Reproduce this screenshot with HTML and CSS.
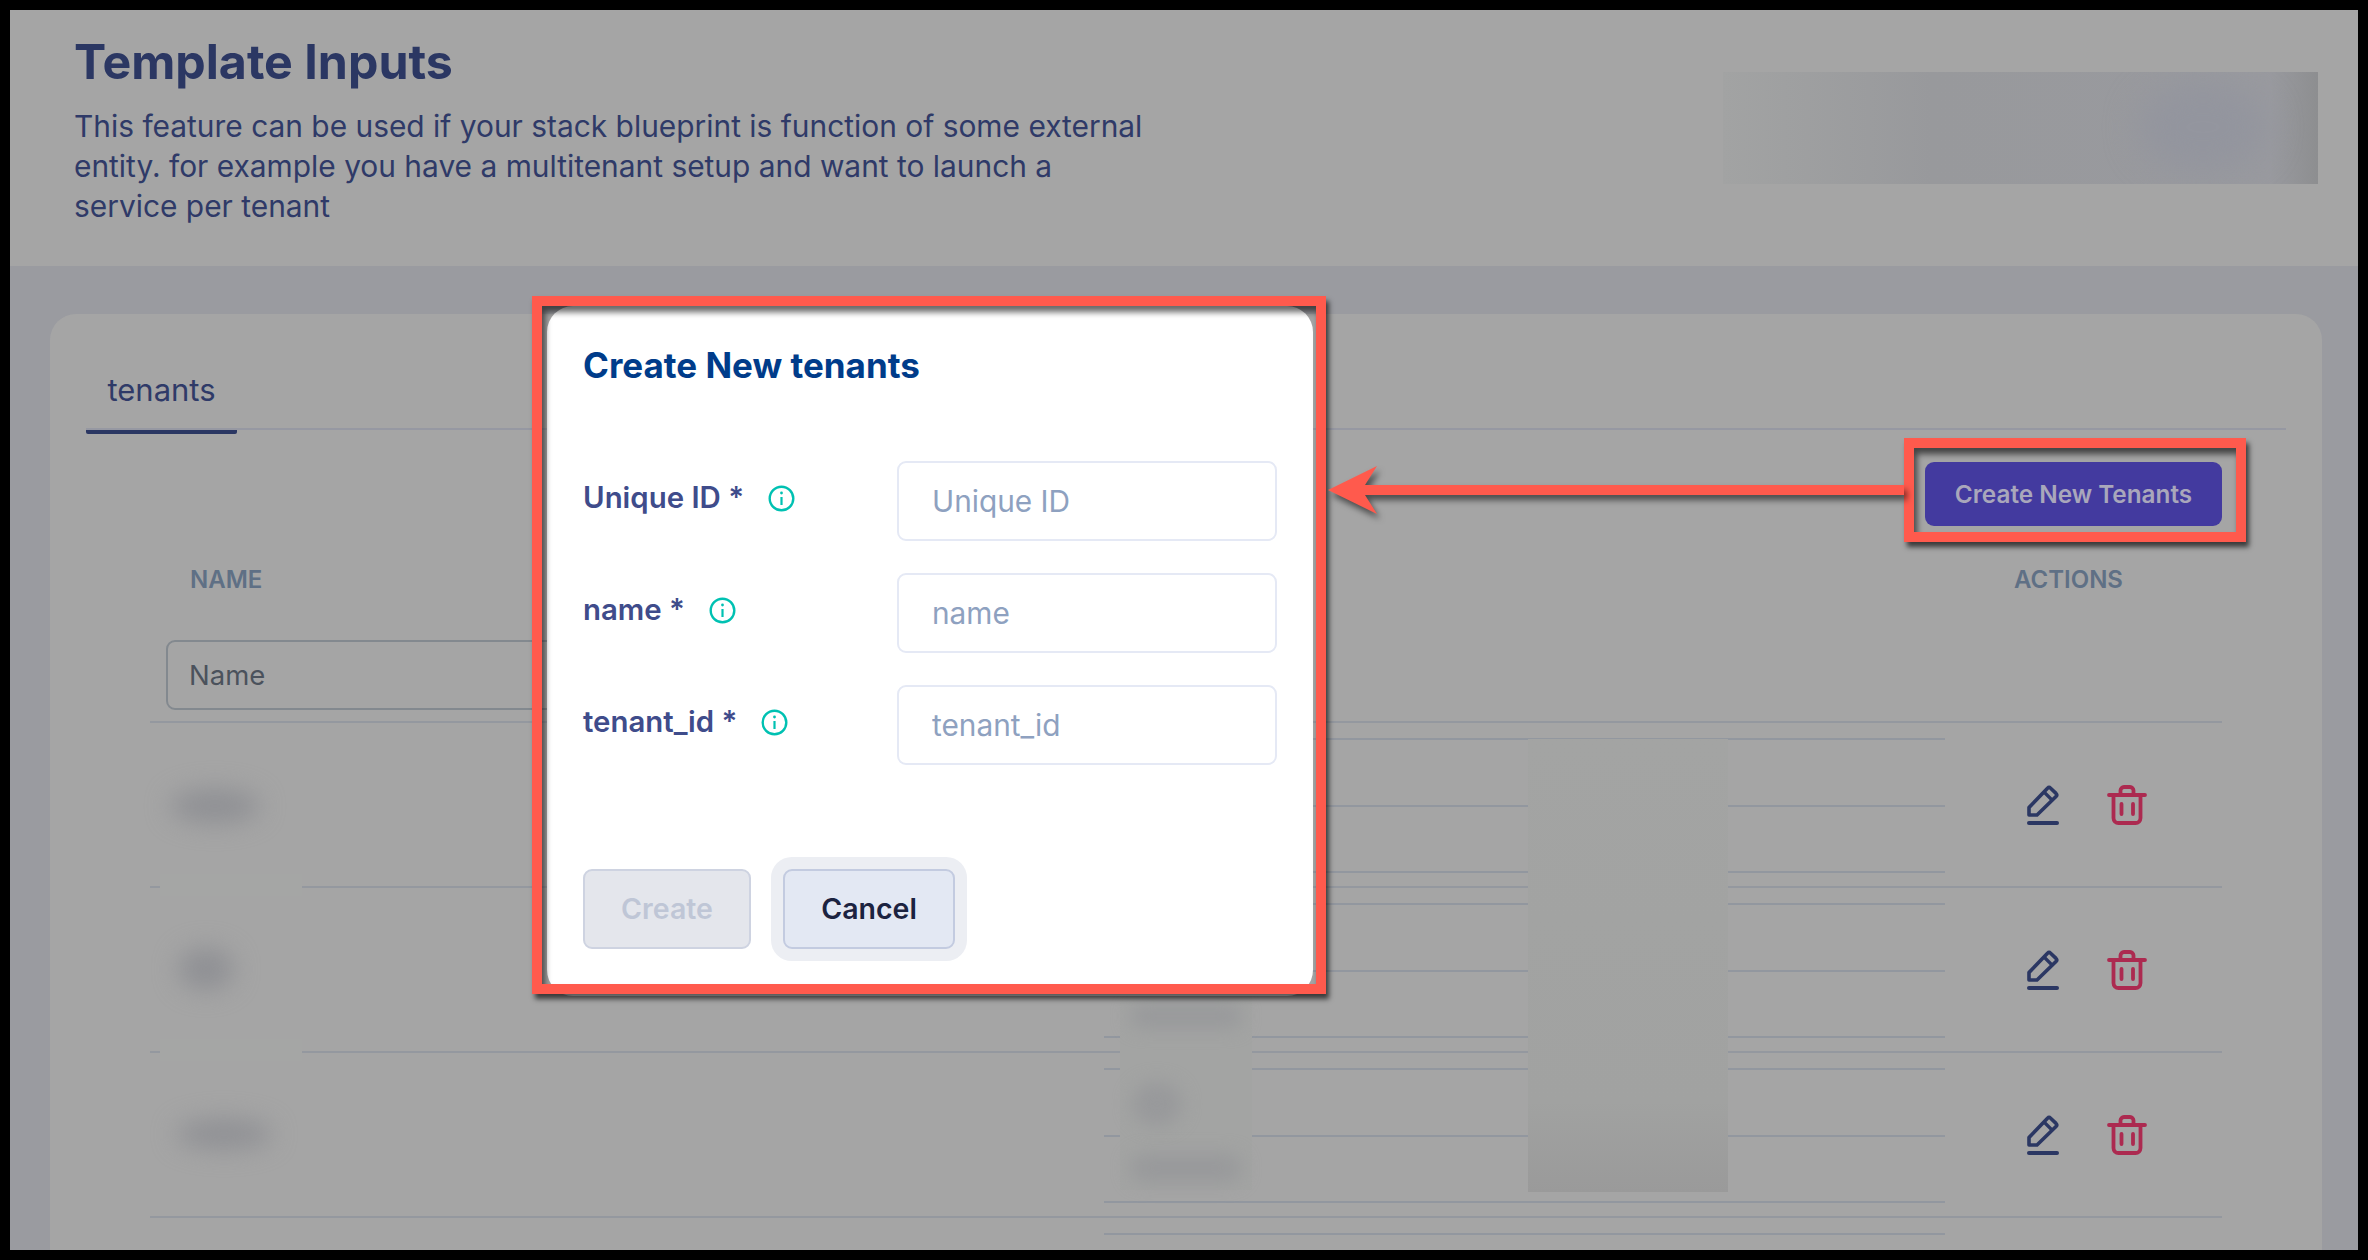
FILE: index.html
```html
<!DOCTYPE html>
<html lang="en">
<head>
<meta charset="utf-8">
<title>Template Inputs</title>
<link rel="stylesheet" href="styles.css">
</head>
<body>
<svg class="defs" width="0" height="0" aria-hidden="true">
  <symbol id="pencil" viewBox="0 0 32 40">
    <path d="M2 30V22.5L20.5 3.2a2.2 2.2 0 0 1 3.1 0l5.4 5.2a2.2 2.2 0 0 1 0 3.1L10 30Z" fill="none" stroke="currentColor" stroke-width="3.6" stroke-linejoin="round"/>
    <path d="M17.5 7.5l7.5 7.5" fill="none" stroke="currentColor" stroke-width="3.2"/>
    <path d="M2 38H30" fill="none" stroke="currentColor" stroke-width="4" stroke-linecap="round"/>
  </symbol>
  <symbol id="trash" viewBox="0 0 40 40">
    <path d="M2 10H38M13.5 10V5.5a3.5 3.5 0 0 1 3.5-3.5h6a3.5 3.5 0 0 1 3.5 3.5V10M6.5 10V33a5 5 0 0 0 5 5h17a5 5 0 0 0 5-5V10M14.500 19V29M26 19V29" fill="none" stroke="currentColor" stroke-width="3.8" stroke-linecap="round"/>
  </symbol>
  <symbol id="info" viewBox="0 0 27 27">
    <circle cx="13.500" cy="13.500" r="11.800" fill="none" stroke="currentColor" stroke-width="2.400"/>
    <circle cx="13.500" cy="8" r="1.400" fill="currentColor"/>
    <path d="M13.500 12V20" fill="none" stroke="currentColor" stroke-width="2.200"/>
  </symbol>
</svg>

<div class="screen">
  <header class="page-head">
    <div class="head-text">
      <h1 class="page-title">Template Inputs</h1>
      <p class="page-desc">This feature can be used if your stack blueprint is function of some external entity. for example you have a multitenant setup and want to launch a service per tenant</p>
    </div>
    <div class="banner"><span class="banner-blob"></span></div>
  </header>

  <main class="card">
    <div class="tabs"><div class="tab">tenants</div></div>
    <div class="toolbar"><button class="btn-primary" type="button">Create New Tenants</button></div>

    <div class="table">
      <div class="thead">
        <span class="th">NAME</span>
        <span class="th th-actions">ACTIONS</span>
      </div>
      <div class="filter-row"><input class="filter" type="text" placeholder="Name"></div>

      <div class="row">
        <div class="cell-name"><span class="smudge smudge-a"></span><span class="cover"></span></div>
        <div class="nested"><div class="sub"></div><div class="sub"></div><div class="sub"></div></div>
        <div class="actions">
          <svg class="ico-edit"><use href="#pencil"/></svg>
          <svg class="ico-del"><use href="#trash"/></svg>
        </div>
      </div>
      <div class="row">
        <div class="cell-name"><span class="smudge smudge-b"></span><span class="cover"></span></div>
        <div class="nested"><div class="sub"></div><div class="sub"></div><div class="sub"></div></div>
        <div class="actions">
          <svg class="ico-edit"><use href="#pencil"/></svg>
          <svg class="ico-del"><use href="#trash"/></svg>
        </div>
      </div>
      <div class="row">
        <div class="cell-name"><span class="smudge smudge-c"></span></div>
        <div class="nested"><div class="sub"></div><div class="sub"></div><div class="sub"></div></div>
        <div class="actions">
          <svg class="ico-edit"><use href="#pencil"/></svg>
          <svg class="ico-del"><use href="#trash"/></svg>
        </div>
      </div>
      <div class="row">
        <div class="cell-name"></div>
        <div class="nested"><div class="sub"></div></div>
        <div class="actions"></div>
      </div>

      <div class="patch patch-left">
        <span class="patch-blob pb-1"></span>
        <span class="patch-blob pb-2"></span>
        <span class="patch-blob pb-3"></span>
      </div>
      <div class="patch patch-right"></div>
    </div>
  </main>

  <section class="modal">
    <h2 class="modal-title">Create New tenants</h2>
    <form class="form">
      <div class="field">
        <label class="field-label">Unique ID *<svg class="ico-info"><use href="#info"/></svg></label>
        <input class="field-input" type="text" placeholder="Unique ID">
      </div>
      <div class="field">
        <label class="field-label">name *<svg class="ico-info"><use href="#info"/></svg></label>
        <input class="field-input" type="text" placeholder="name">
      </div>
      <div class="field">
        <label class="field-label">tenant_id *<svg class="ico-info"><use href="#info"/></svg></label>
        <input class="field-input" type="text" placeholder="tenant_id">
      </div>
    </form>
    <div class="modal-actions">
      <button class="btn-create" type="button" disabled>Create</button>
      <button class="btn-cancel" type="button">Cancel</button>
    </div>
  </section>

  <div class="mark mark-modal"></div>
  <div class="mark mark-button"></div>
  <svg class="arrow" width="600" height="60" viewBox="0 0 600 60">
    <polygon points="8,30 57,6 45,25 584,25 584,35 45,35 57,54" fill="#ff5a4d"/>
  </svg>
</div>
</body>
</html>
```

FILE: styles.css
```css
* { box-sizing: border-box; }

html, body {
  margin: 0;
  padding: 0;
  width: 2368px;
  height: 1260px;
  overflow: hidden;
  background: #000;
  font-family: "Inter", "Liberation Sans", sans-serif;
}

.defs { position: absolute; }

.screen {
  position: relative;
  margin: 10px;
  width: 2348px;
  height: 1240px;
  overflow: hidden;
  background: #9a9ba0;
  display: flex;
  flex-direction: column;
}

/* Page header */
.page-head {
  flex: none;
  height: 256px;
  background: #a5a5a5;
  padding-left: 64px;
  padding-right: 40px;
  display: flex;
  justify-content: space-between;
  align-items: flex-start;
}

.head-text { width: 1075px; }

.page-title {
  margin: 24px 0 0;
  font-size: 48.300px;
  line-height: 56px;
  font-weight: 700;
  color: #2b3763;
}

.page-desc {
  margin: 16px 0 0;
  font-size: 29.900px;
  line-height: 40px;
  font-weight: 400;
  color: #2f3a68;
}

.banner {
  position: relative;
  margin-top: 62px;
  width: 595px;
  height: 112px;
  overflow: hidden;
  background: linear-gradient(90deg, #a2a3a3 0%, #98999c 35%, #999a9f 92%, #8d8e90 100%);
}

.banner-blob {
  position: absolute;
  left: 415px;
  top: 10px;
  width: 130px;
  height: 90px;
  border-radius: 50%;
  background: #93959e;
  filter: blur(16px);
}

/* Card */
.card {
  flex: 1;
  margin: 48px 36px 0 40px;
  background: #a5a5a5;
  border-radius: 26px 26px 0 0;
  min-height: 0;
}

.tabs {
  margin: 0 36px;
  height: 116px;
  border-bottom: 2px solid #9698a2;
}

.tab {
  width: 151px;
  height: 120px;
  padding-top: 56px;
  text-align: center;
  font-size: 31px;
  line-height: 40px;
  color: #2f3a68;
  border-bottom: 4px solid #2b3763;
  border-radius: 0 0 2px 2px;
}

.toolbar {
  display: flex;
  justify-content: flex-end;
  padding: 32px 100px 0 0;
}

.btn-primary {
  width: 297px;
  height: 64px;
  border: 0;
  border-radius: 9px;
  background: #433a9f;
  color: #a9a7bb;
  font: 600 24.300px/1 "Inter", "Liberation Sans", sans-serif;
}

/* Table */
.table {
  position: relative;
  margin: 0 100px;
}

.thead {
  height: 114px;
  padding-top: 41px;
  position: relative;
}

.th {
  display: block;
  margin-left: 40px;
  font-size: 24px;
  line-height: 26px;
  font-weight: 600;
  color: #5f7085;
}

.th-actions {
  position: absolute;
  left: 1864px;
  top: 41px;
  margin: 0;
}

.filter-row {
  height: 83px;
  padding-left: 16px;
  border-bottom: 2px solid #94989f;
}

.filter {
  display: block;
  width: 700px;
  height: 70px;
  padding: 0 21px;
  border: 2px solid #83898f;
  border-radius: 9px;
  background: transparent;
  font: 400 27.500px/1 "Inter", "Liberation Sans", sans-serif;
  outline: 0;
}

.filter::placeholder { color: #4b525c; opacity: 1; }

.row {
  position: relative;
  height: 165px;
  display: grid;
  grid-template-columns: 954px 841px 277px;
  grid-template-rows: minmax(0, 1fr);
  border-bottom: 2px solid #94989f;
}

.cell-name { position: relative; }

.smudge {
  position: absolute;
  display: block;
  background: #8f9094;
  border-radius: 50%;
  filter: blur(12px);
}

.smudge-a { left: 20px; top: 66px; width: 90px; height: 34px; }
.smudge-b { left: 28px; top: 60px; width: 56px; height: 42px; }
.smudge-c { left: 26px; top: 66px; width: 96px; height: 30px; }

.cover {
  position: absolute;
  left: 10px;
  bottom: -10px;
  width: 142px;
  height: 22px;
  background: #a5a6a5;
}

.nested { padding-top: 15px; }

.sub {
  height: 66.500px;
  border-top: 2px solid #92979f;
}

.actions {
  display: flex;
  align-items: center;
  gap: 48px;
  padding-left: 82px;
}

.ico-edit { width: 32px; height: 40px; color: #2b3763; }
.ico-del { width: 40px; height: 40px; color: #ac2a50; }

.patch { position: absolute; }

.patch-right {
  left: 1378px;
  top: 213px;
  width: 200px;
  height: 453px;
  background: linear-gradient(180deg, #a3a4a3 0%, #a1a2a1 80%, #9a9a9a 100%);
}

.patch-left {
  left: 970px;
  top: 197px;
  width: 132px;
  height: 467px;
  background: #a3a4a3;
}

.patch-blob {
  position: absolute;
  display: block;
  background: #98999b;
  filter: blur(9px);
  border-radius: 14px;
}

.pb-1 { left: 10px; top: 281px; width: 112px; height: 24px; }
.pb-2 { left: 12px; top: 359px; width: 50px; height: 44px; border-radius: 50%; }
.pb-3 { left: 10px; top: 431px; width: 112px; height: 28px; }

/* Modal */
.modal {
  position: absolute;
  left: 537px;
  top: 296px;
  width: 766px;
  height: 690px;
  padding: 38px 36px 0 36px;
  background: #fff;
  border-radius: 26px;
}

.modal-title {
  margin: 0;
  font-size: 35px;
  line-height: 42px;
  font-weight: 700;
  color: #003c8a;
}

.form {
  margin-top: 75px;
  display: flex;
  flex-direction: column;
  gap: 32px;
}

.field {
  height: 80px;
  display: flex;
  justify-content: space-between;
  align-items: flex-start;
}

.field-label {
  display: flex;
  align-items: center;
  gap: 24px;
  margin-top: 21px;
  font-size: 29.400px;
  line-height: 32px;
  font-weight: 600;
  color: #3f4c8b;
}

.ico-info { width: 27px; height: 27px; color: #00c1b2; }

.field-input {
  width: 380px;
  height: 80px;
  padding: 0 33px;
  border: 2px solid #e5e9f5;
  border-radius: 9px;
  background: #fff;
  font: 400 29.800px/1 "Inter", "Liberation Sans", sans-serif;
  outline: 0;
}

.field-input::placeholder { color: #8ea1c0; opacity: 1; }

.modal-actions {
  margin-top: 104px;
  display: flex;
  gap: 32px;
}

.btn-create,
.btn-cancel {
  height: 80px;
  border-radius: 9px;
  font: 600 28.500px/1 "Inter", "Liberation Sans", sans-serif;
}

.btn-create {
  width: 168px;
  background: #e4e6ec;
  border: 2px solid #ced3e1;
  color: #bfc6d6;
}

.btn-cancel {
  width: 172px;
  background: #e3e8f3;
  border: 2px solid #c3cbe0;
  color: #1c2340;
  box-shadow: 0 0 0 12px #eceef3;
}

/* Annotations */
.mark {
  position: absolute;
  border: 10px solid #ff5a4d;
  box-shadow: 3px 5px 5px rgba(0, 0, 0, .65), inset 3px 6px 6px rgba(0, 0, 0, .6);
}

.mark-modal { left: 522px; top: 286px; width: 794px; height: 698px; }
.mark-button { left: 1894px; top: 428px; width: 342px; height: 104px; }

.arrow {
  position: absolute;
  left: 1310px;
  top: 450px;
  filter: drop-shadow(3px 5px 3px rgba(0, 0, 0, .55));
}
```
